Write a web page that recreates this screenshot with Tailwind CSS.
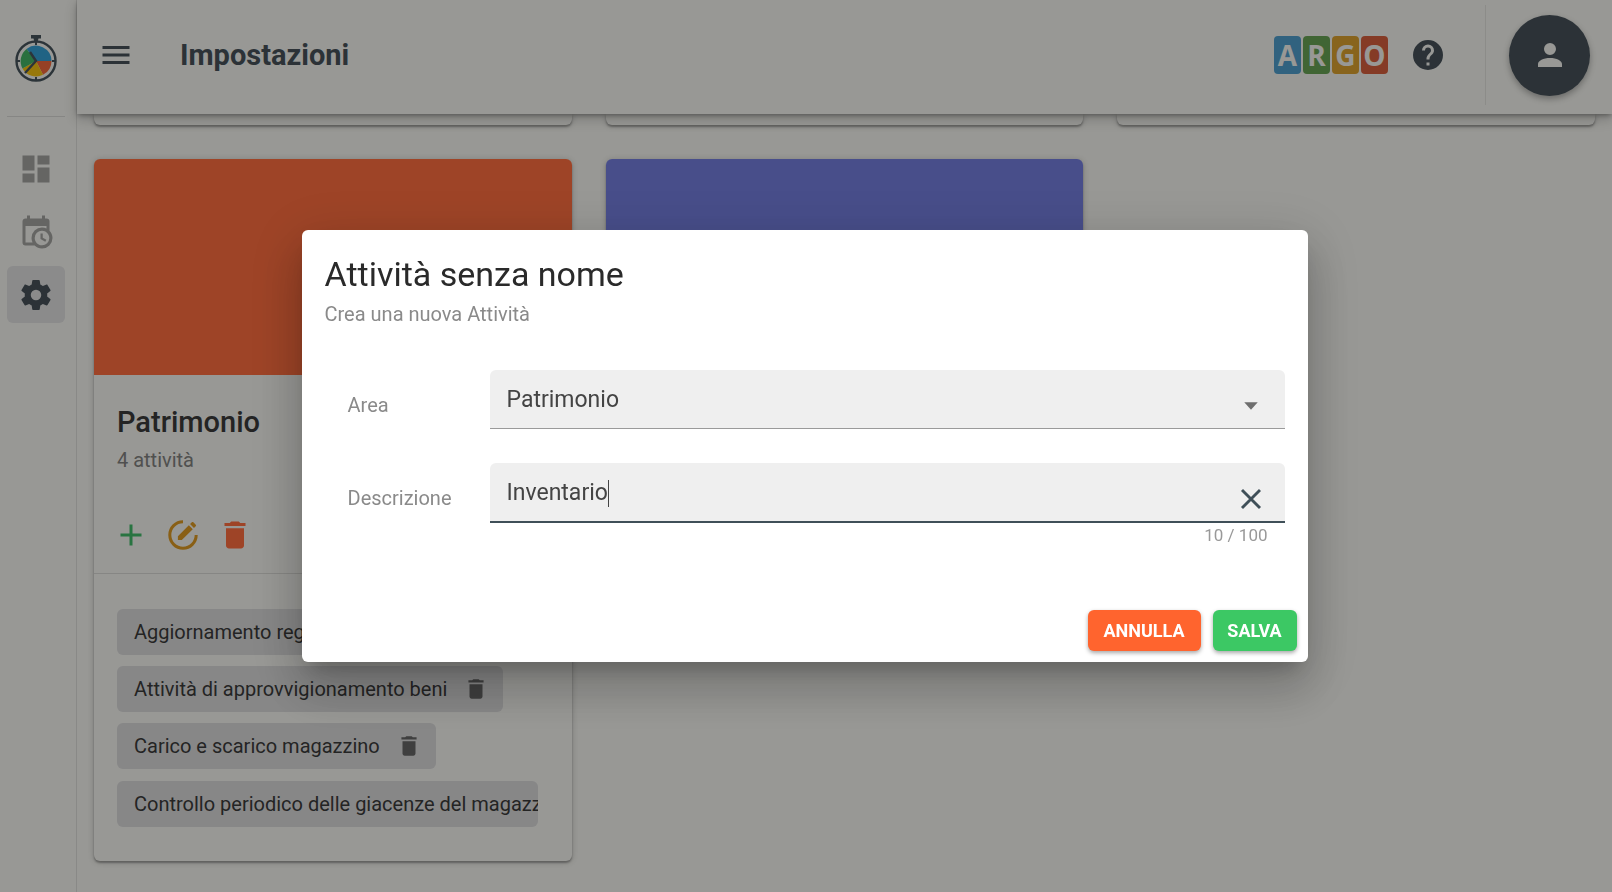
<!DOCTYPE html>
<html lang="it">
<head>
<meta charset="utf-8">
<meta name="viewport" content="width=device-width, initial-scale=1">
<title>Impostazioni</title>
<script src="https://cdn.jsdelivr.net/npm/@tailwindcss/browser@4"></script>
</head>
<body class="h-screen overflow-hidden bg-[#f5f5f0] font-['Roboto',sans-serif] text-[#3a3a3a]">
<svg class="hidden">
  <symbol id="trash" viewBox="0 0 24 24"><path d="M6 19c0 1.100.9 2 2 2h8c1.100 0 2-.9 2-2V7.500H6V19zM19 4h-3.500l-1-1h-5l-1 1H5v2h14V4z"/></symbol>
</svg>

<div class="flex h-full">
  <nav class="flex w-[77px] shrink-0 flex-col border-r border-[#dededa] pr-[11px] pl-[7px]" aria-label="Principale">
    <a href="#" aria-label="Home" class="flex h-[117px] items-center justify-center border-b border-[#d9d9d5]">
      <svg class="h-12 w-11" viewBox="0 0 44 48">
        <circle cx="22" cy="27" r="19.500" fill="none" stroke="#47545c" stroke-width="2.400"/>
        <path d="M17 1h10v3.500h-2.500L23.500 8h-3L19.500 4.500H17z" fill="#47545c"/>
        <path d="M22 27h15.500A15.500 15.500 0 0 0 12.500 15z" fill="#35a0d6"/>
        <path d="M22 27h15.500A15.500 15.500 0 0 1 29 40.800z" fill="#f26a3c"/>
        <path d="M22 27l7 13.800A15.500 15.500 0 0 1 8.500 34.500z" fill="#f5c211"/>
        <path d="M22 27L8.500 34.500A15.500 15.500 0 0 1 12.500 15z" fill="#45b566"/>
        <path d="M22 7v4M22 43v4M2 27h4M38 27h4" stroke="#47545c" stroke-width="2"/>
        <path d="M16 18l6 9L11 39" fill="none" stroke="#47545c" stroke-width="2.400"/>
      </svg>
    </a>
    <ul class="mt-[23px] flex flex-col gap-1.5">
      <li><a href="#" aria-label="Cruscotto" class="flex h-[57px] w-full items-center justify-center rounded-md">
        <svg class="size-9 fill-[#a4a4a1]" viewBox="0 0 24 24"><path d="M3 13h8V3H3v10zm0 8h8v-6H3v6zm10 0h8V11h-8v10zm0-18v6h8V3h-8z"/></svg></a></li>
      <li><a href="#" aria-label="Calendario" class="flex h-[57px] w-full items-center justify-center rounded-md">
        <svg class="size-9 fill-[#a4a4a1]" viewBox="0 0 24 24"><path d="M15 13h1.500v2.820l2.440 1.410-.75 1.300L15 16.690V13m4-5H5v11h4.670c-.43-.91-.67-1.930-.67-3a7 7 0 0 1 7-7c1.070 0 2.090.24 3 .67V8M5 21a2 2 0 0 1-2-2V5c0-1.110.89-2 2-2h1V1h2v2h8V1h2v2h1a2 2 0 0 1 2 2v6.100c1.240 1.260 2 2.990 2 4.900a7 7 0 0 1-7 7c-1.910 0-3.640-.76-4.900-2H5m11-9.850A4.850 4.850 0 0 0 11.150 16c0 2.680 2.170 4.850 4.850 4.850A4.850 4.850 0 0 0 20.850 16c0-2.680-2.170-4.850-4.850-4.850z"/></svg></a></li>
      <li><a href="#" aria-label="Impostazioni" aria-current="page" class="flex h-[57px] w-full items-center justify-center rounded-md bg-[#e0e0e0]">
        <svg class="size-9 fill-[#47525a]" viewBox="0 0 24 24"><path d="M12 15.500A3.500 3.500 0 0 1 8.500 12 3.500 3.500 0 0 1 12 8.500a3.500 3.500 0 0 1 3.500 3.500 3.500 3.500 0 0 1-3.500 3.500m7.430-2.530c.04-.32.07-.64.07-.97s-.03-.66-.07-1l2.110-1.630c.19-.15.24-.42.12-.64l-2-3.460c-.12-.22-.39-.31-.61-.22l-2.490 1c-.52-.39-1.060-.73-1.690-.98l-.37-2.650A.506.506 0 0 0 14 2h-4c-.25 0-.46.18-.5.420l-.37 2.650c-.63.25-1.170.59-1.690.98l-2.490-1c-.22-.09-.49 0-.61.22l-2 3.460c-.13.22-.07.49.12.64L4.570 11c-.04.34-.07.67-.07 1s.03.65.07.97l-2.110 1.660c-.19.15-.25.42-.12.64l2 3.460c.12.22.39.3.61.22l2.490-1.010c.52.4 1.060.74 1.690.99l.37 2.650c.04.24.25.42.5.420h4c.25 0 .46-.18.5-.42l.37-2.650c.63-.26 1.170-.59 1.690-.99l2.490 1.010c.22.08.49 0 .61-.22l2-3.460c.12-.22.07-.49-.12-.64l-2.110-1.660z"/></svg></a></li>
    </ul>
  </nav>

  <div class="flex min-w-0 flex-1 flex-col">
    <header class="relative z-10 flex h-[114px] shrink-0 items-center bg-[#f5f5f0] pr-[22px] pb-1 pl-[21px] shadow-[0_2px_5px_-1px_rgba(0,0,0,.35),0_5px_12px_rgba(0,0,0,.2)]">
      <button type="button" aria-label="Menu"><svg class="size-9 fill-[#47525a]" viewBox="0 0 24 24"><path d="M3 6h18v2H3V6m0 5h18v2H3v-2m0 5h18v2H3v-2z"/></svg></button>
      <h1 class="ml-[46px] text-[29px] leading-9 font-bold text-[#47525a]">Impostazioni</h1>
      <div class="ml-auto flex gap-0.5 font-['Open_Sans',sans-serif] text-[28px] leading-[38px] font-bold text-[#f5f5f0]">
        <span class="w-[27px] rounded bg-[#4f9fcd] text-center">A</span><span class="w-[27px] rounded bg-[#68a454] text-center">R</span><span class="w-[27px] rounded bg-[#dba22f] text-center">G</span><span class="w-[27px] rounded bg-[#d7603e] text-center">O</span>
      </div>
      <button type="button" aria-label="Aiuto" class="ml-[22px]"><svg class="size-9 fill-[#47525a]" viewBox="0 0 24 24"><path d="M15.070 11.250l-.9.920C13.450 12.890 13 13.500 13 15h-2v-.5c0-1.110.45-2.110 1.170-2.830l1.240-1.260c.37-.36.59-.86.59-1.410a2 2 0 0 0-4 0H8a4 4 0 0 1 8 0c0 .88-.36 1.670-.93 2.250M13 19h-2v-2h2M12 2a10 10 0 1 0 0 20 10 10 0 0 0 0-20z"/></svg></button>
      <div class="ml-[39px] h-[100px] w-px bg-[#e2e2de]"></div>
      <button type="button" aria-label="Profilo" class="ml-[23px] flex size-[81px] items-center justify-center rounded-full bg-[#47525a] shadow-[0_3px_6px_rgba(0,0,0,.3)]"><svg class="size-9 fill-[#f5f5f0]" viewBox="0 0 24 24"><path d="M12 4a4 4 0 1 1 0 8 4 4 0 0 1 0-8m0 10c4.420 0 8 1.790 8 4v2H4v-2c0-2.210 3.580-4 8-4z"/></svg></button>
    </header>

    <main class="min-h-0 flex-1 overflow-hidden px-[17px]">
      <div class="grid grid-cols-3 items-start gap-[34px]">
        <div class="h-[11px] rounded-b-md shadow-[0_2px_2px_rgba(0,0,0,.28),0_1px_6px_rgba(0,0,0,.2)]"></div>
        <div class="h-[11px] rounded-b-md shadow-[0_2px_2px_rgba(0,0,0,.28),0_1px_6px_rgba(0,0,0,.2)]"></div>
        <div class="h-[11px] rounded-b-md shadow-[0_2px_2px_rgba(0,0,0,.28),0_1px_6px_rgba(0,0,0,.2)]"></div>

        <article class="overflow-hidden rounded-md bg-[#f5f5f0] pb-[34px] shadow-[0_2px_2px_rgba(0,0,0,.28),0_1px_6px_rgba(0,0,0,.2)]">
          <div class="h-[216px] bg-[#ff6e3f]"></div>
          <div class="h-[199px] border-b border-[#d9d9d5] px-[23px] pt-[29px]">
            <h2 class="text-[29px] leading-9 font-medium">Patrimonio</h2>
            <p class="mt-1.5 text-xl leading-7 text-[#828280]">4 attività</p>
            <div class="mt-[43px] ml-[-4px] flex gap-4">
              <button type="button" aria-label="Aggiungi"><svg class="size-9 fill-[#43bc6a]" viewBox="0 0 24 24"><path d="M19 13h-6v6h-2v-6H5v-2h6V5h2v6h6v2z"/></svg></button>
              <button type="button" aria-label="Modifica"><svg class="size-9" viewBox="0 0 24 24"><path d="M12 3.200a8.800 8.800 0 1 0 8.800 8.800" fill="none" stroke="#dd9a22" stroke-width="2"/><path d="M8.600 15.400v-2.600L15.900 5.500l2.600 2.600-7.300 7.300zM16.700 4.700l1.200-1.200c.3-.3.700-.3 1 0l1.600 1.600c.3.3.3.7 0 1l-1.200 1.200z" fill="#dd9a22"/></svg></button>
              <button type="button" aria-label="Elimina"><svg class="size-9 fill-[#ff6e3f]"><use href="#trash"/></svg></button>
            </div>
          </div>
          <ul class="mt-[35px] mr-[34px] ml-[23px] flex flex-col items-start gap-[11px] overflow-hidden text-xl whitespace-nowrap">
            <li class="flex h-[46px] items-center gap-4 rounded-md bg-[#dadada] pr-3.5 pl-[17px]">Aggiornamento registri <button type="button" aria-label="Elimina"><svg class="size-[26px] fill-[#666]"><use href="#trash"/></svg></button></li>
            <li class="flex h-[46px] items-center gap-4 rounded-md bg-[#dadada] pr-3.5 pl-[17px]">Attività di approvvigionamento beni <button type="button" aria-label="Elimina"><svg class="size-[26px] fill-[#666]"><use href="#trash"/></svg></button></li>
            <li class="flex h-[46px] items-center gap-4 rounded-md bg-[#dadada] pr-3.5 pl-[17px]">Carico e scarico magazzino <button type="button" aria-label="Elimina"><svg class="size-[26px] fill-[#666]"><use href="#trash"/></svg></button></li>
            <li class="mt-px h-[46px] w-full overflow-hidden rounded-md bg-[#dadada] pl-[17px] leading-[46px]">Controllo periodico delle giacenze del magazzino</li>
          </ul>
        </article>
        <article class="overflow-hidden rounded-md shadow-[0_2px_2px_rgba(0,0,0,.28),0_1px_6px_rgba(0,0,0,.2)]">
          <div class="h-[216px] bg-[#747edf]"></div>
        </article>
      </div>
    </main>
  </div>
</div>

<div class="fixed inset-0 z-20 flex items-center justify-center bg-black/38 pr-[3px]">
  <form role="dialog" aria-labelledby="dlg-title" class="flex w-full max-w-[1006px] flex-col rounded-md bg-white shadow-[0_13px_18px_-8px_rgba(0,0,0,.2),0_28px_45px_4px_rgba(0,0,0,.14),0_11px_54px_10px_rgba(0,0,0,.12)]">
    <div class="px-[23px] pt-6">
      <h2 id="dlg-title" class="text-[34px] leading-10 text-[#2a2a2a]">Attività senza nome</h2>
      <p class="mt-1.5 text-xl leading-7 text-[#8a8a8a]">Crea una nuova Attività</p>
    </div>
    <div class="mt-[42px] grid grid-cols-[142px_1fr] gap-y-[34px] pr-[23px] pl-[46px] text-xl text-[#8a8a8a]">
      <label for="area" class="pt-[21px]">Area</label>
      <div class="relative">
        <select id="area" class="block h-[59px] w-full appearance-none rounded-t-md border-b border-[#9a9a9a] bg-[#efefef] px-[17px] pt-0.5 text-[23px] text-[#444] outline-none"><option>Patrimonio</option></select>
        <svg class="pointer-events-none absolute top-[18px] right-4 size-9 fill-[#6e6e6e]" viewBox="0 0 24 24"><path d="M7.500 9.500h9L12 14.500z"/></svg>
      </div>
      <label for="desc" class="pt-[21px]">Descrizione</label>
      <div>
        <div class="flex h-[60px] items-center rounded-t-md border-b-2 border-[#3f4f58] bg-[#efefef] pt-0.5 pr-4 pl-[17px]">
          <input id="desc" type="text" value="Inventario" maxlength="100" class="field-sizing-content bg-transparent text-[23px] text-[#444] caret-transparent outline-none">
          <span class="h-[27px] w-px bg-[#444]"></span>
          <button type="button" aria-label="Cancella" class="mt-3 ml-auto"><svg class="size-9" viewBox="0 0 24 24"><path d="M6 6l12 12M18 6L6 18" stroke="#3f4f58" stroke-width="1.900"/></svg></button>
        </div>
        <p class="pr-[17px] text-right text-[17px] leading-6 text-[#999]">10 / 100</p>
      </div>
    </div>
    <div class="mt-[63px] flex justify-end gap-3 pr-[11px] pb-[11px] text-lg font-bold text-white">
      <button type="button" class="h-[41px] w-[113px] rounded-md bg-[#ff642e] shadow-[0_2px_4px_rgba(0,0,0,.35)]">ANNULLA</button>
      <button type="submit" class="h-[41px] w-[84px] rounded-md bg-[#3cc864] shadow-[0_2px_4px_rgba(0,0,0,.35)]">SALVA</button>
    </div>
  </form>
</div>
</body>
</html>
